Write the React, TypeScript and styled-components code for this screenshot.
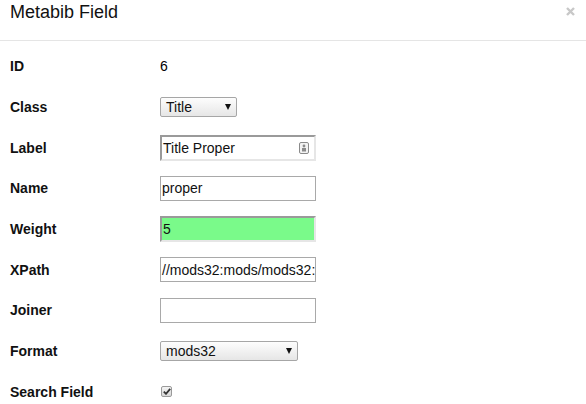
import React from "react";
import styled, { createGlobalStyle } from "styled-components";

const Global = createGlobalStyle`
  html, body { margin: 0; padding: 0; background: #fff; }
  body { font-family: "Liberation Sans", Arial, sans-serif; color: #000; }
`;

const Dialog = styled.div`
  width: 586px;
  height: 404px;
  overflow: hidden;
  position: relative;
`;

const Header = styled.div`
  height: 41px;
  box-sizing: border-box;
  padding: 2px 0 0 10px;
  border-bottom: 1px solid #e5e5e5;
  display: flex;
  align-items: flex-start;
  justify-content: space-between;
`;

const Title = styled.h3`
  margin: 0;
  font-size: 18px;
  line-height: 20px;
  font-weight: normal;
  color: #111;
`;

const Close = styled.button`
  border: 0;
  background: none;
  padding: 0;
  margin: 4px 11px 0 0;
  width: 9px;
  height: 10px;
  display: flex;
  align-items: center;
  justify-content: center;
  cursor: pointer;
`;

const Form = styled.div`
  display: grid;
  grid-template-columns: 150px 1fr;
  grid-auto-rows: 40.7px;
  padding: 5px 0 0 10px;
`;

const Label = styled.div`
  display: flex;
  align-items: center;
  font-weight: bold;
  font-size: 14px;
  color: #111;
`;

const Value = styled.div`
  display: flex;
  align-items: center;
  font-size: 14px;
`;

const Select = styled.div<{ $w: number }>`
  width: ${(p) => p.$w}px;
  height: 20px;
  box-sizing: border-box;
  border: 1px solid #a6a6a6;
  border-radius: 2px;
  background: linear-gradient(#fdfdfd, #e6e6e6);
  display: flex;
  align-items: center;
  justify-content: space-between;
  padding: 0 5px 0 5px;
  font-size: 14px;
  color: #111;
`;

const Arrow = styled.span`
  width: 0;
  height: 0;
  border-left: 3.5px solid transparent;
  border-right: 3.5px solid transparent;
  border-top: 6px solid #111;
`;

const Input = styled.div<{ $inset?: boolean; $bg?: string }>`
  width: 156px;
  height: ${(p) => (p.$inset ? 26 : 25)}px;
  box-sizing: border-box;
  border-style: solid;
  border-width: ${(p) => (p.$inset ? 2 : 1)}px;
  border-color: ${(p) =>
    p.$inset ? "#9a9a9a #e6e6e6 #e6e6e6 #9a9a9a" : "#a9a9a9"};
  background: ${(p) => p.$bg || "#fff"};
  display: flex;
  align-items: center;
  justify-content: space-between;
  padding: 0 ${(p) => (p.$inset ? 5 : 1)}px 0 1px;
  font-size: 14px;
  color: #111;
  white-space: nowrap;
  overflow: hidden;
`;

const Check = styled.div`
  width: 11px;
  height: 11px;
  margin-left: 1px;
  box-sizing: border-box;
  border: 1px solid #9a9a9a;
  border-radius: 2px;
  background: linear-gradient(#f4f4f4, #d8d8d8);
  display: flex;
  align-items: center;
  justify-content: center;
`;

const rows: { label: string; node: React.ReactNode }[] = [
  { label: "ID", node: <span>6</span> },
  {
    label: "Class",
    node: (
      <Select $w={77}>
        Title <Arrow />
      </Select>
    ),
  },
  {
    label: "Label",
    node: (
      <Input $inset>
        <span>Title Proper</span>
        <svg width="10" height="12" viewBox="0 0 10 12">
          <rect x="0.5" y="0.5" width="9" height="11" rx="1.5" fill="#f2f2f2" stroke="#8a8a8a" />
          <circle cx="5" cy="4" r="1.4" fill="#8a8a8a" />
          <rect x="3" y="6" width="4" height="3.5" fill="#8a8a8a" />
        </svg>
      </Input>
    ),
  },
  { label: "Name", node: <Input>proper</Input> },
  { label: "Weight", node: <Input $inset $bg="#7afa8a">5</Input> },
  { label: "XPath", node: <Input>//mods32:mods/mods32:</Input> },
  { label: "Joiner", node: <Input /> },
  {
    label: "Format",
    node: (
      <Select $w={138}>
        mods32 <Arrow />
      </Select>
    ),
  },
  {
    label: "Search Field",
    node: (
      <Check>
        <svg width="8" height="7" viewBox="0 0 8 7">
          <path d="M0.8 3.6 L3 5.8 L7.2 0.9" fill="none" stroke="#333" strokeWidth="1.8" />
        </svg>
      </Check>
    ),
  },
];

export default function App() {
  return (
    <>
      <Global />
      <Dialog>
        <Header>
          <Title>Metabib Field</Title>
          <Close aria-label="close">
            <svg width="9" height="9" viewBox="0 0 9 9">
              <path d="M1 1 L8 8 M8 1 L1 8" stroke="#c8c8c8" strokeWidth="2.4" />
            </svg>
          </Close>
        </Header>
        <Form>
          {rows.map((r) => (
            <React.Fragment key={r.label}>
              <Label>{r.label}</Label>
              <Value>{r.node}</Value>
            </React.Fragment>
          ))}
        </Form>
      </Dialog>
    </>
  );
}
